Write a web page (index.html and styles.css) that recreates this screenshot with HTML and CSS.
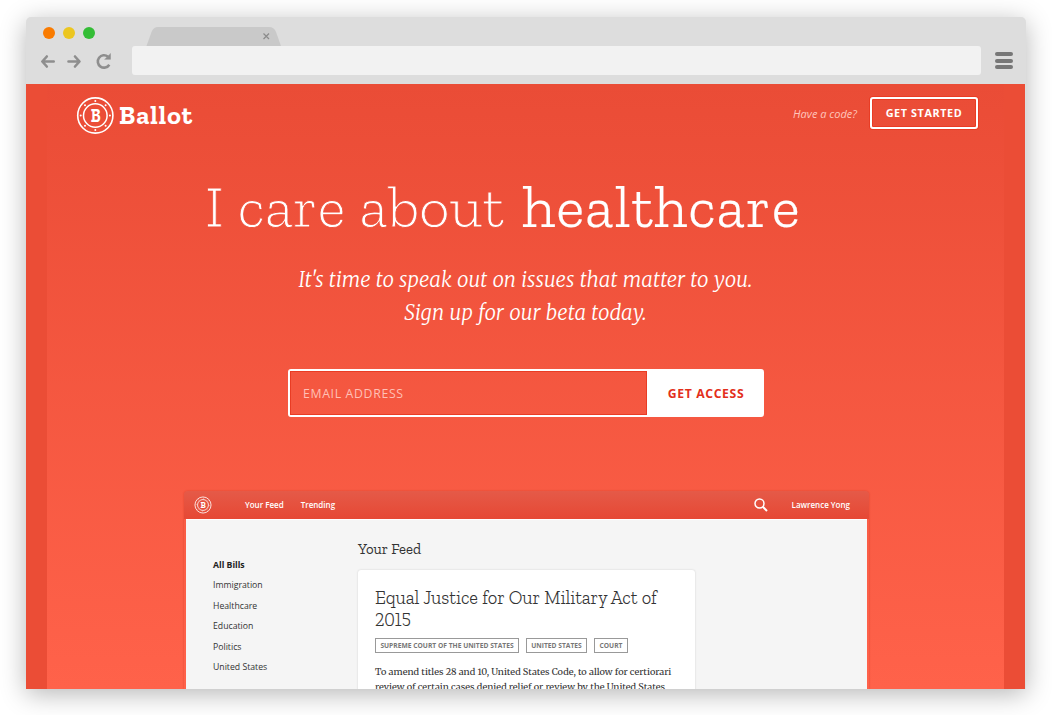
FILE: index.html
```html
<!DOCTYPE html>
<html lang="en">
<head>
<meta charset="utf-8">
<title>Ballot</title>
<link rel="stylesheet" href="styles.css">
</head>
<body>
<div class="window">
  <header class="chrome">
    <div class="tabs">
      <i class="dot orange"></i><i class="dot yellow"></i><i class="dot green"></i>
      <svg class="tab" width="136" height="19" viewBox="0 0 136 19"><path d="M0.500 19L5.500 5Q7.500 0 12 0H123Q128 0 130 5L135 19Z" fill="#c9c9c9"/><path d="M117.500 6.500l5.500 5.500m0-5.500l-5.500 5.500" stroke="#8b8b8b" stroke-width="1.200"/></svg>
    </div>
    <div class="tools">
      <svg class="nav" width="72" height="20" viewBox="0 0 72 20" fill="none" stroke="#8e8e8e" stroke-width="2.600" stroke-linecap="round" stroke-linejoin="round"><path d="M6.800 5.500L2.300 10.500 6.800 15.500M3 10.500h10.700M35 5.500l4.500 5L35 15.500M39 10.500H28.500"/><path d="M69.300 13.700A6.200 6.200 0 1 1 68 5.700" stroke-linecap="butt"/><path d="M70.500 2.800v5.500h-5.500z" fill="#8e8e8e" stroke-width=".5"/></svg>
      <div class="address"></div>
      <div class="menu"><i></i><i></i><i></i></div>
    </div>
  </header>
  <main class="page">
    <nav class="top">
      <div class="brand">
        <svg class="seal" width="38" height="38" viewBox="0 0 38 38">
          <g fill="none" stroke="#fff"><circle cx="19.300" cy="18.500" r="17.600" stroke-width="1.600"/><circle cx="19.300" cy="18.500" r="11.800" stroke-width="1.500"/></g>
          <g fill="#fff"><circle cx="19.300" cy="3.900" r="1"/><circle cx="19.300" cy="33.100" r="1"/><circle cx="4.700" cy="18.500" r="1"/><circle cx="33.900" cy="18.500" r="1"/><circle cx="9" cy="8.200" r="1"/><circle cx="29.600" cy="8.200" r="1"/><circle cx="9" cy="28.800" r="1"/><circle cx="29.600" cy="28.800" r="1"/></g>
          <text x="0" y="0" transform="translate(19.800 24.700) scale(.88 1.080)" text-anchor="middle" class="seal-letter">B</text>
        </svg>
        <span class="brand-name">Ballot</span>
      </div>
      <a class="code">Have a code?</a>
      <a class="start">GET STARTED</a>
    </nav>
    <h1 class="headline"><span class="lead">I care about</span><span class="topic">healthcare</span></h1>
    <p class="pitch"><span class="p1">It's time to speak out on issues that matter to you.</span><span class="p2">Sign up for our beta today.</span></p>
    <div class="signup"><div class="email"><span>EMAIL ADDRESS</span></div><div class="access"><span>GET ACCESS</span></div></div>
    <section class="app">
      <div class="appbar">
        <svg class="mini" width="18" height="18" viewBox="0 0 38 38">
          <g fill="none" stroke="#fff" opacity=".85"><circle cx="19" cy="19" r="17" stroke-width="2"/><circle cx="19" cy="19" r="11.500" stroke-width="2"/><circle cx="19" cy="19" r="14.300" stroke-width="1.500" stroke-dasharray="1.500 9.730"/></g>
          <text x="19.400" y="24.500" text-anchor="middle" class="seal-letter">B</text>
        </svg>
        <span class="feed-link">Your Feed</span><span class="trend">Trending</span>
        <svg class="search" width="14" height="14" viewBox="0 0 14 14" fill="none" stroke="#fff"><circle cx="5.500" cy="5.500" r="4.500" stroke-width="1.500"/><path d="M8.800 8.800L13 13" stroke-width="2"/></svg>
        <span class="user">Lawrence Yong</span>
      </div>
      <div class="appbody">
        <ul class="side"><li class="on">All Bills</li><li>Immigration</li><li>Healthcare</li><li>Education</li><li>Politics</li><li>United States</li></ul>
        <div class="feed">
          <h2><span class="ft">Your Feed</span></h2>
          <article class="card">
            <h3><span class="t1">Equal Justice for Our Military Act of</span><br><span class="t2">2015</span></h3>
            <div class="tags"><span class="tag a">SUPREME COURT OF THE UNITED STATES</span><span class="tag b">UNITED STATES</span><span class="tag c">COURT</span></div>
            <p><span class="b1">To amend titles 28 and 10, United States Code, to allow for certiorari</span><br><span class="b2">review of certain cases denied relief or review by the United States</span></p>
          </article>
        </div>
      </div>
    </section>
  </main>
</div>
</body>
</html>
```
FILE: styles.css
```css
* { box-sizing: border-box; margin: 0; padding: 0; }
body { width: 1052px; height: 715px; padding: 17px 26px; overflow: hidden; background: #fff; font-family: "Open Sans", sans-serif; }
.window { width: 1000px; height: 672px; border-radius: 5px 5px 0 0; background: #ddd; box-shadow: 0 5px 26px rgba(0,0,0,.29); }
.chrome { height: 67px; padding: 10px 12px 0 14px; }
.tabs { display: flex; height: 19px; }
.dot { width: 12px; height: 12px; border-radius: 50%; margin-left: 8px; }
.dot.orange { background: #f97b00; margin-left: 3px; }
.dot.yellow { background: #ecc620; }
.dot.green { background: #34bd36; }
.tab { margin-left: 51px; }
.tools { display: flex; }
.nav { margin-top: 5px; }
.address { width: 849px; height: 29px; margin-left: 20px; border-radius: 3px; background: #f2f2f2; }
.menu { margin: 6px 0 0 14px; display: flex; flex-direction: column; gap: 2.500px; }
.menu i { width: 18px; height: 4px; border-radius: 2px; background: #777; }
.page { width: 999px; height: 605px; overflow: hidden; border: solid #eb4d36; border-width: 0 21px; background: linear-gradient(#ea4c36, #ff624a); color: #fff; display: flex; flex-direction: column; }
.top { display: flex; height: 64px; padding: 13px 26px 0 29px; flex: none; }
.brand { display: flex; flex: 1; height: 38px; align-items: center; }
.seal-letter { font: bold 18px "Roboto Slab", "Zilla Slab", "DejaVu Serif", serif; fill: #fff; }
.brand-name { margin-left: 5px; font: bold 26px/36px "Roboto Slab", "Zilla Slab", "DejaVu Serif", serif; letter-spacing: 1px; padding-bottom: 2px; }
.code { font-size: 11px; line-height: 34px; font-style: italic; color: #ffc5bc; margin-right: 13px; }
.start { width: 108px; height: 32px; border: 2px solid #fff; border-radius: 3px; font-size: 10.800px; line-height: 28px; font-weight: 700; letter-spacing: .6px; text-align: center; box-shadow: 0 0 0 1px #e93c24, inset 0 0 0 1px #e93c24; }
.headline { flex: none; display: flex; height: 108px; margin: 18px 0 0 157px; font: 300 60px/80px "Roboto Slab", "Zilla Slab", Roboto, sans-serif; white-space: nowrap; }
.lead { width: 318px; padding-left: 1px; letter-spacing: -.3px; -webkit-text-stroke: .8px #ee503a; }
.topic { letter-spacing: .9px; -webkit-text-stroke: .15px #fff; }
.pitch { flex: none; height: 88px; margin-top: -10px; display: flex; flex-direction: column; align-items: center; font: italic 300 20.400px/33px "Merriweather", "Liberation Serif", serif; letter-spacing: .1px; word-spacing: .5px; }
.signup { flex: none; width: 476px; height: 48px; margin: 17px 0 0 241px; display: flex; border: 2px solid #fff; border-radius: 3px; }
.email { flex: 1; padding-left: 13px; font-size: 12.300px; line-height: 45px; letter-spacing: .65px; color: #ffc0b6; box-shadow: inset 0 0 0 1px #e93c24; }
.access { width: 115px; padding-left: 3px; text-align: center; background: #fff; color: #e32f1b; font-weight: 700; font-size: 12.200px; line-height: 45px; letter-spacing: .65px; }
.app { width: 685px; margin: 74px 0 0 137px; border-radius: 4px 4px 0 0; overflow: hidden; flex: none; height: 198px; box-shadow: 0 0 2px rgba(180,20,0,.4); }
.appbar { display: flex; align-items: center; height: 28px; padding: 0 19px 0 10px; background: linear-gradient(#e55a48, #e64834); font-size: 8px; font-weight: 600; }
.appbar span { padding-bottom: 2px; }
.feed-link { margin-left: 33px; }
.trend { margin-left: 17px; flex: 1; }
.search { margin-right: 24px; }
.appbody { display: flex; height: 170px; margin: 0 2px; background: #f5f5f5; color: #333; border-top: 1px solid #fff; }
.side { width: 172px; padding: 34.500px 0 0 27px; list-style: none; font-size: 8.700px; line-height: 20.500px; }
.on { font-weight: 700; color: #222; }
.feed { width: 337px; padding-top: 19px; }
h2 { font: 400 14.800px/20px "Roboto Slab", "Zilla Slab", Roboto, sans-serif; }
.card { height: 130px; margin-top: 11px; padding: 17px 17px 0; background: #fff; border-radius: 3px; box-shadow: 0 0 2px #ccc; white-space: nowrap; }
h3 { font: 300 18.600px/21.500px "Roboto Slab", "Zilla Slab", Roboto, sans-serif; letter-spacing: -.1px; font-variant-numeric: lining-nums; }
.tags { display: flex; gap: 7px; margin-top: 8px; }
.tag { height: 15px; width: 34px; text-align: center; border: 1px solid #999; color: #777; font-size: 6.700px; line-height: 14px; font-weight: 700; }
.tag.a { width: 144px; }
.tag.b { width: 61px; }
.card p { margin-top: 12px; font: 9.200px/15px "Merriweather", "DejaVu Serif", serif; }
```
